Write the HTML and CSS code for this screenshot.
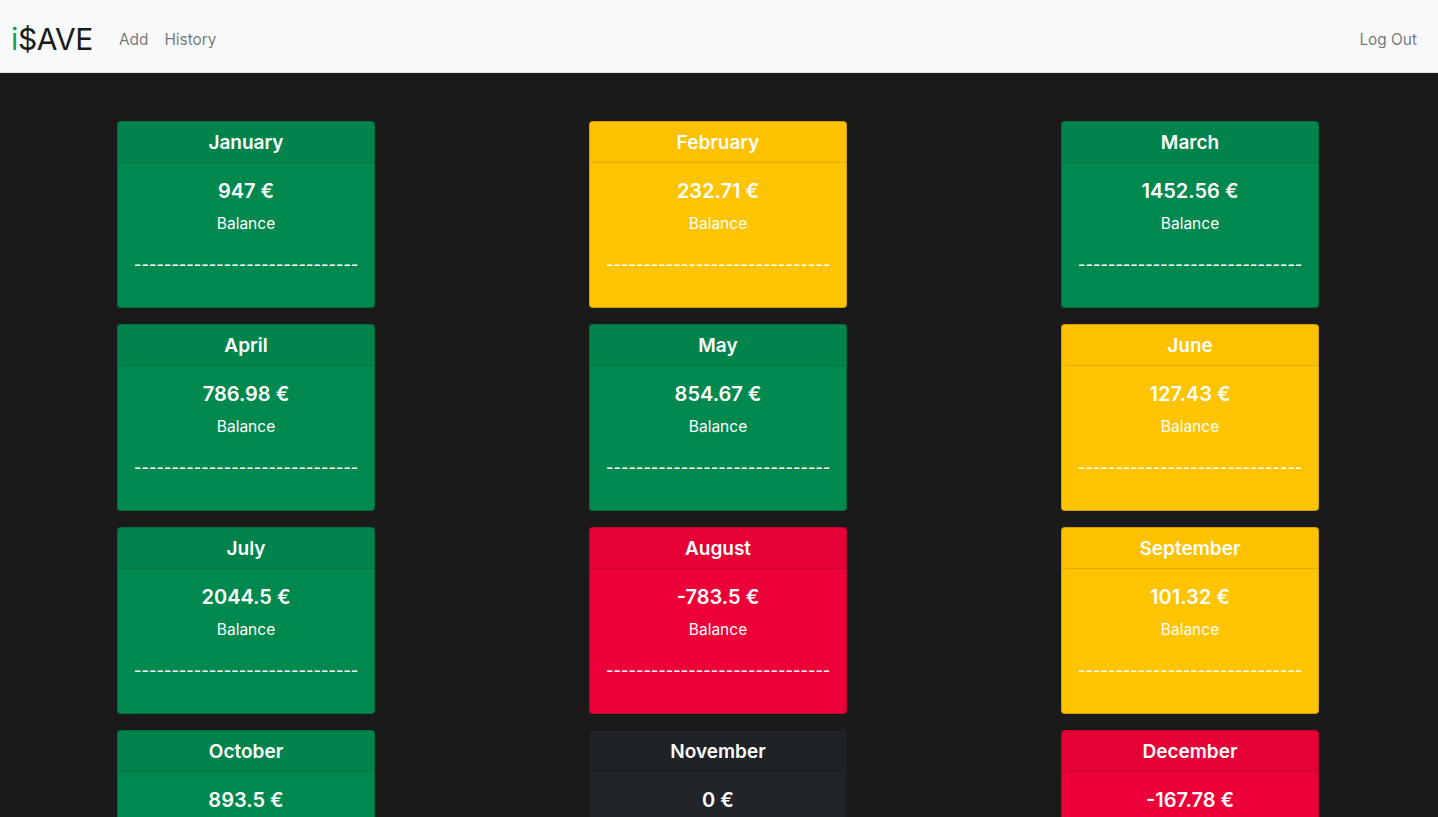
FILE: index.html
```html
<!DOCTYPE html>
<html lang="en">
<head>
<meta charset="utf-8">
<title>i$AVE</title>
<link rel="stylesheet" href="styles.css">
</head>
<body>
<nav class="navbar">
  <a class="brand" href="#"><span class="brand-i">i</span>$AVE</a>
  <ul class="nav-links">
    <li><a href="#">Add</a></li>
    <li><a href="#">History</a></li>
  </ul>
  <a class="logout" href="#">Log Out</a>
</nav>
<main class="months">
  <div class="card green"><div class="card-header">January</div><div class="card-body"><h5 class="amount">947 €</h5><p class="label">Balance</p><p class="dashes">------------------------------</p></div></div>
  <div class="card yellow"><div class="card-header">February</div><div class="card-body"><h5 class="amount">232.71 €</h5><p class="label">Balance</p><p class="dashes">------------------------------</p></div></div>
  <div class="card green"><div class="card-header">March</div><div class="card-body"><h5 class="amount">1452.56 €</h5><p class="label">Balance</p><p class="dashes">------------------------------</p></div></div>
  <div class="card green"><div class="card-header">April</div><div class="card-body"><h5 class="amount">786.98 €</h5><p class="label">Balance</p><p class="dashes">------------------------------</p></div></div>
  <div class="card green"><div class="card-header">May</div><div class="card-body"><h5 class="amount">854.67 €</h5><p class="label">Balance</p><p class="dashes">------------------------------</p></div></div>
  <div class="card yellow"><div class="card-header">June</div><div class="card-body"><h5 class="amount">127.43 €</h5><p class="label">Balance</p><p class="dashes">------------------------------</p></div></div>
  <div class="card green"><div class="card-header">July</div><div class="card-body"><h5 class="amount">2044.5 €</h5><p class="label">Balance</p><p class="dashes">------------------------------</p></div></div>
  <div class="card red"><div class="card-header">August</div><div class="card-body"><h5 class="amount">-783.5 €</h5><p class="label">Balance</p><p class="dashes">------------------------------</p></div></div>
  <div class="card yellow"><div class="card-header">September</div><div class="card-body"><h5 class="amount">101.32 €</h5><p class="label">Balance</p><p class="dashes">------------------------------</p></div></div>
  <div class="card green"><div class="card-header">October</div><div class="card-body"><h5 class="amount">893.5 €</h5><p class="label">Balance</p><p class="dashes">------------------------------</p></div></div>
  <div class="card dark"><div class="card-header">November</div><div class="card-body"><h5 class="amount">0 €</h5><p class="label">Balance</p><p class="dashes">------------------------------</p></div></div>
  <div class="card red"><div class="card-header">December</div><div class="card-body"><h5 class="amount">-167.78 €</h5><p class="label">Balance</p><p class="dashes">------------------------------</p></div></div>
</main>
</body>
</html>
```
FILE: styles.css
```css
* { box-sizing: border-box; }
html, body {
  margin: 0;
  padding: 0;
}
body {
  background: #1a1a1a;
  font-family: Inter, "Liberation Sans", sans-serif;
  font-size: 16px;
  line-height: 24px;
  color: #fff;
}
a { text-decoration: none; }

.navbar {
  display: flex;
  align-items: center;
  height: 73px;
  padding: 8px 21px 0 11px;
  background: #f8f9fa;
  border-bottom: 1px solid #dee2e6;
}
.brand {
  font-size: 30px;
  line-height: 40px;
  color: #1a1a1a;
  letter-spacing: -0.4px;
  margin-right: 18px;
  margin-top: -3px;
}
.brand-i { color: #1b9a4a; }
.nav-links {
  display: flex;
  list-style: none;
  margin: 0;
  padding: 0;
}
.nav-links a, .logout {
  display: block;
  padding: 8px 8px;
  color: rgba(0, 0, 0, 0.55);
  font-size: 15.4px;
}
.logout { margin-left: auto; padding-right: 0; }

.months {
  display: grid;
  grid-template-columns: repeat(3, 1fr);
  justify-items: center;
  row-gap: 16px;
  padding: 48px 12px 16px 10px;
}
.card {
  width: 258px;
  border-radius: 4px;
  border: 1px solid rgba(0, 0, 0, 0.18);
  overflow: hidden;
  text-align: center;
}
.card-header {
  padding: 9px 16px 7px;
  font-size: 19px;
  font-weight: 600;
  line-height: 24px;
  border-bottom: 1px solid rgba(0, 0, 0, 0.1);
  background: rgba(0, 0, 0, 0.03);
}
.yellow .card-header { background: rgba(240, 150, 0, 0.06); }
.card-body { padding: 16px; }
.amount {
  margin: 0 0 8px;
  font-size: 20px;
  font-weight: 600;
  line-height: 24px;
}
.label {
  margin: 0 0 16px;
  font-size: 15.5px;
  padding-top: 1px;
}
.dashes {
  margin: 0 0 15px;
  font-size: 16px;
  letter-spacing: 0.08px;
  font-weight: 500;
  white-space: nowrap;
}
.green { background: #00894f; }
.yellow { background: #ffc400; }
.red { background: #ed0037; }
.dark { background: #212529; }
```
